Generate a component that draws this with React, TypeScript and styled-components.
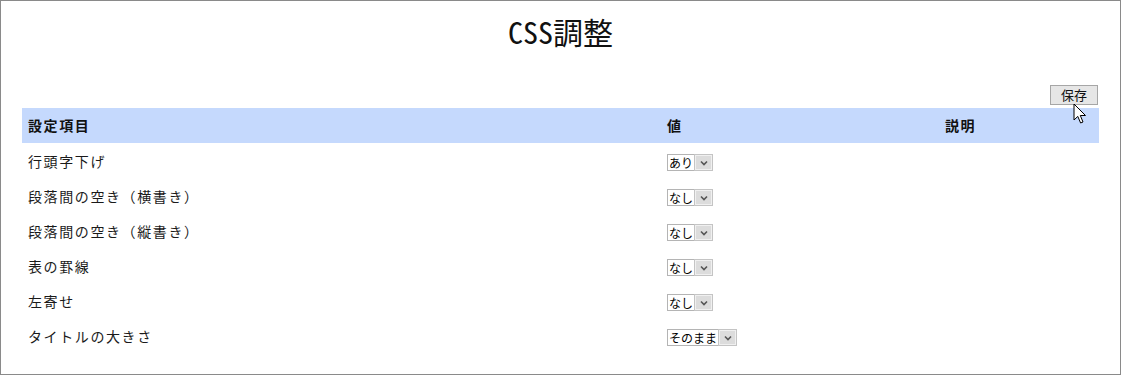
import React from "react";
import styled, { createGlobalStyle } from "styled-components";

const GlobalStyle = createGlobalStyle`
  html, body { margin: 0; padding: 0; background: #fff; }
  body { font-family: "Noto Sans CJK JP", "Noto Sans", sans-serif; color: #111; }
`;

const Frame = styled.div`
  box-sizing: border-box;
  width: 1121px;
  height: 375px;
  border: 1px solid #8a8a8a;
  padding: 0 21px;
  display: flex;
  flex-direction: column;
`;

const Title = styled.h1`
  margin: 10px 0 0;
  height: 40px;
  line-height: 40px;
  text-align: center;
  font-size: 30px;
  font-weight: 400;
  font-feature-settings: "hwid";
  color: #111;
`;

const Toolbar = styled.div`
  margin-top: 34px;
  display: flex;
  justify-content: flex-end;
  position: relative;
`;

const SaveButton = styled.button`
  box-sizing: border-box;
  width: 48px;
  height: 20px;
  margin-right: 1px;
  padding: 0;
  background: #e6e6e6;
  border: 1px solid #a6a6a6;
  border-radius: 0;
  font-family: "Noto Sans CJK JP", sans-serif;
  font-size: 13px;
  line-height: 18px;
  color: #111;
`;

const Cursor = styled.svg`
  position: absolute;
  right: 12px;
  top: 18px;
  width: 14px;
  height: 22px;
  z-index: 2;
`;

const Table = styled.table`
  margin-top: 3px;
  width: 1077px;
  border-collapse: collapse;
  table-layout: fixed;
`;

const HeadCell = styled.th<{ $w: number }>`
  box-sizing: border-box;
  width: ${(p) => p.$w}px;
  height: 35px;
  padding: 0 6px 2px;
  background: #c5d9fd;
  text-align: left;
  font-size: 14px;
  font-weight: 700;
  letter-spacing: 1.6px;
  color: #111;
`;

const Cell = styled.td`
  height: 35px;
  padding: 0 6px;
  font-size: 14px;
  letter-spacing: 1.6px;
  color: #1a1a1a;
  vertical-align: middle;
`;

const FakeSelect = styled.span`
  box-sizing: border-box;
  display: inline-flex;
  align-items: stretch;
  height: 17px;
  margin-top: 2px;
  border: 1px solid #b4b4b4;
  background: #fff;
  vertical-align: middle;
`;

const SelectText = styled.span`
  padding: 0 2px 0 1px;
  font-size: 12px;
  line-height: 15px;
  letter-spacing: 0;
  color: #000;
`;

const ArrowBox = styled.span`
  box-sizing: border-box;
  width: 17px;
  display: flex;
  align-items: center;
  justify-content: center;
  background: #dcdcdc;
  border: 1px solid #f0f0f0;
  outline: 1px solid #c4c4c4;
`;

const rows = [
  { label: "行頭字下げ", value: "あり" },
  { label: "段落間の空き（横書き）", value: "なし" },
  { label: "段落間の空き（縦書き）", value: "なし" },
  { label: "表の罫線", value: "なし" },
  { label: "左寄せ", value: "なし" },
  { label: "タイトルの大きさ", value: "そのまま" },
];

function Select({ value }: { value: string }) {
  return (
    <FakeSelect>
      <SelectText>{value}</SelectText>
      <ArrowBox>
        <svg width="8" height="6" viewBox="0 0 8 6">
          <path d="M1 1.5 L4 4.5 L7 1.5" fill="none" stroke="#555" strokeWidth="1.6" />
        </svg>
      </ArrowBox>
    </FakeSelect>
  );
}

export default function App() {
  return (
    <>
      <GlobalStyle />
      <Frame>
        <Title>CSS調整</Title>
        <Toolbar>
          <SaveButton>保存</SaveButton>
          <Cursor viewBox="0 0 14 22">
            <path
              d="M1 1 L1 17 L4.8 13.4 L7.6 20 L10 19 L7.3 12.5 L12.5 12.5 Z"
              fill="#fff"
              stroke="#000"
              strokeWidth="1"
            />
          </Cursor>
        </Toolbar>
        <Table>
          <thead>
            <tr>
              <HeadCell $w={639}>設定項目</HeadCell>
              <HeadCell $w={278}>値</HeadCell>
              <HeadCell $w={160}>説明</HeadCell>
            </tr>
          </thead>
          <tbody>
            {rows.map((r) => (
              <tr key={r.label}>
                <Cell>{r.label}</Cell>
                <Cell>
                  <Select value={r.value} />
                </Cell>
                <Cell />
              </tr>
            ))}
          </tbody>
        </Table>
      </Frame>
    </>
  );
}
